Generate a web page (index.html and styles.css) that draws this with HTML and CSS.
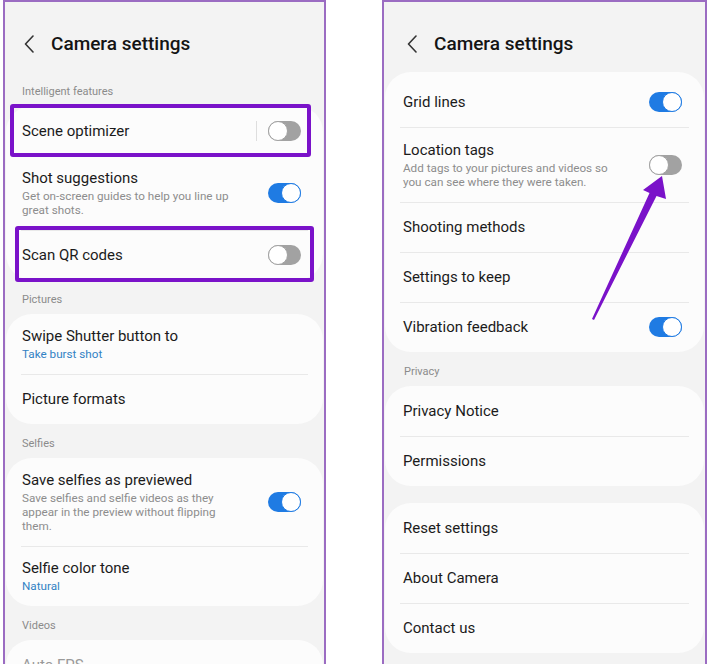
FILE: index.html
```html
<!DOCTYPE html>
<html lang="en">
<head>
<meta charset="utf-8">
<title>Camera settings</title>
<link rel="stylesheet" href="styles.css">
</head>
<body>
<div class="screens">
  <section class="panel panel-left">
    <header class="header">
      <svg class="back" width="10" height="18" viewBox="0 0 10 18"><polyline points="9,1 1.5,9 9,17" fill="none" stroke="#333" stroke-width="1.6" stroke-linecap="round" stroke-linejoin="round"/></svg>
      <h1 class="title">Camera settings</h1>
    </header>
    <div class="label">Intelligent features</div>
    <div class="card">
      <div class="row mark mark-1">
        <div class="text"><div class="name">Scene optimizer</div></div>
        <span class="vbar"></span>
        <span class="toggle off"><span class="knob"></span></span>
      </div>
      <div class="row tall">
        <div class="text">
          <div class="name">Shot suggestions</div>
          <div class="sub">Get on-screen guides to help you line up great shots.</div>
        </div>
        <span class="toggle on"><span class="knob"></span></span>
      </div>
      <div class="row mark mark-2">
        <div class="text"><div class="name">Scan QR codes</div></div>
        <span class="toggle off"><span class="knob"></span></span>
      </div>
    </div>
    <div class="label">Pictures</div>
    <div class="card">
      <div class="row tall">
        <div class="text">
          <div class="name">Swipe Shutter button to</div>
          <div class="sub blue">Take burst shot</div>
        </div>
      </div>
      <div class="row">
        <div class="text"><div class="name">Picture formats</div></div>
      </div>
    </div>
    <div class="label">Selfies</div>
    <div class="card">
      <div class="row tall">
        <div class="text">
          <div class="name">Save selfies as previewed</div>
          <div class="sub narrow">Save selfies and selfie videos as they appear in the preview without flipping them.</div>
        </div>
        <span class="toggle on"><span class="knob"></span></span>
      </div>
      <div class="row tall">
        <div class="text">
          <div class="name">Selfie color tone</div>
          <div class="sub blue">Natural</div>
        </div>
      </div>
    </div>
    <div class="label">Videos</div>
    <div class="card">
      <div class="row tall">
        <div class="text"><div class="name faded">Auto FPS</div></div>
      </div>
    </div>
  </section>

  <section class="panel panel-right">
    <header class="header">
      <svg class="back" width="10" height="18" viewBox="0 0 10 18"><polyline points="9,1 1.5,9 9,17" fill="none" stroke="#333" stroke-width="1.6" stroke-linecap="round" stroke-linejoin="round"/></svg>
      <h1 class="title">Camera settings</h1>
    </header>
    <div class="card card-top">
      <div class="row">
        <div class="text"><div class="name">Grid lines</div></div>
        <span class="toggle on"><span class="knob"></span></span>
      </div>
      <div class="row tall">
        <div class="text">
          <div class="name">Location tags</div>
          <div class="sub">Add tags to your pictures and videos so you can see where they were taken.</div>
        </div>
        <span class="toggle off"><span class="knob"></span></span>
      </div>
      <div class="row">
        <div class="text"><div class="name">Shooting methods</div></div>
      </div>
      <div class="row">
        <div class="text"><div class="name">Settings to keep</div></div>
      </div>
      <div class="row">
        <div class="text"><div class="name">Vibration feedback</div></div>
        <span class="toggle on"><span class="knob"></span></span>
      </div>
    </div>
    <div class="label">Privacy</div>
    <div class="card">
      <div class="row">
        <div class="text"><div class="name">Privacy Notice</div></div>
      </div>
      <div class="row">
        <div class="text"><div class="name">Permissions</div></div>
      </div>
    </div>
    <div class="card card-spaced">
      <div class="row">
        <div class="text"><div class="name">Reset settings</div></div>
      </div>
      <div class="row">
        <div class="text"><div class="name">About Camera</div></div>
      </div>
      <div class="row">
        <div class="text"><div class="name">Contact us</div></div>
      </div>
    </div>
  </section>
</div>
<svg class="arrow" width="707" height="664" viewBox="0 0 707 664">
  <polygon points="662,176 666,199 656.5,196 594,320 592,319 649.5,193 643,190" fill="#7a12c9"/>
</svg>
</body>
</html>
```

FILE: styles.css
```css
* { box-sizing: border-box; }

html, body {
  margin: 0;
  padding: 0;
  background: #ffffff;
}

body {
  position: relative;
  width: 707px;
  height: 664px;
  overflow: hidden;
  font-family: Roboto, "Noto Sans", "Liberation Sans", sans-serif;
  color: #1b1b1b;
}

.screens {
  display: flex;
  gap: 56px;
  padding-left: 3px;
  height: 664px;
}

.panel {
  height: 664px;
  overflow: hidden;
  background: #f3f3f3;
  border: 2px solid #9b6cc2;
  border-bottom: none;
  display: flex;
  flex-direction: column;
}

.panel-left { width: 323px; }
.panel-right { width: 325px; }

.header {
  display: flex;
  align-items: center;
  gap: 17px;
  padding: 32px 0 18px 19px;
  flex: none;
}

.panel-right .header { padding-left: 23px; }

.back { display: block; flex: none; }

.title {
  margin: 0;
  font-size: 19px;
  line-height: 20px;
  font-weight: 500;
  color: #141414;
}

.label {
  padding: 13px 0 7px 17px;
  font-size: 11px;
  line-height: 14px;
  color: #8b8b8b;
  flex: none;
}

.panel-right .label { padding-left: 20px; }

.card {
  background: #fcfcfc;
  border-radius: 26px;
  margin: 0 1px;
  flex: none;
}

.card-top { padding-top: 5px; }
.card-spaced { margin-top: 17px; }

.row {
  display: flex;
  align-items: center;
  min-height: 50px;
  padding: 0 22px 0 18px;
}

.panel-left .row { padding-left: 16px; }

.row + .row {
  background: linear-gradient(#e9e9e9, #e9e9e9) no-repeat 15px 0 / calc(100% - 30px) 1px;
}

.row.tall {
  padding-top: 14px;
  padding-bottom: 13px;
}

.panel-left .row.tall {
  padding-top: 13px;
  padding-bottom: 13px;
}

.text {
  flex: 1;
  min-width: 0;
}

.name {
  font-size: 15px;
  line-height: 18px;
  color: #1b1b1b;
}

.name.faded { color: #9a9a9a; }

.sub {
  margin-top: 2px;
  font-size: 11.7px;
  line-height: 14px;
  color: #8d8d8d;
  max-width: 215px;
}

.sub.narrow { max-width: 200px; }

.sub.blue { color: #3282c4; }

.vbar {
  width: 1px;
  height: 20px;
  background: #dedede;
  margin-right: 11px;
  flex: none;
}

.toggle {
  display: flex;
  align-items: center;
  width: 33px;
  height: 20px;
  border-radius: 10px;
  flex: none;
}

.toggle.on {
  background: #1f7be3;
  justify-content: flex-end;
}

.toggle.off {
  background: #a2a2a2;
  justify-content: flex-start;
}

.knob {
  width: 20px;
  height: 20px;
  border-radius: 50%;
  background: #ffffff;
  border: 1.5px solid currentColor;
}

.toggle.on .knob { color: #1f7be3; }
.toggle.off .knob { color: #a2a2a2; }

.mark { position: relative; }

.mark::after {
  content: "";
  position: absolute;
  border: 4px solid #7a12c9;
  border-radius: 3px;
  pointer-events: none;
}

.mark-1::after { top: -2px; bottom: -1px; left: 4px; right: 12px; }
.mark-2::after { top: -4px; bottom: -2px; left: 9px; right: 9px; }

.arrow {
  position: absolute;
  left: 0;
  top: 0;
  pointer-events: none;
}
```
